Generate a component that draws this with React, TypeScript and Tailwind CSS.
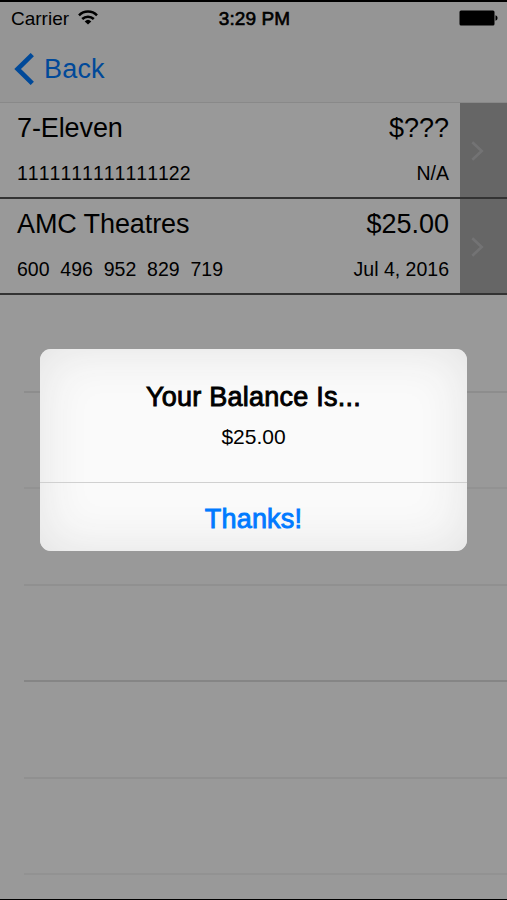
import { useState } from "react";

type Card = {
  name: string;
  number: string;
  balance: string;
  date: string;
};

const cards: Card[] = [
  { name: "7-Eleven", number: "1111111111111122", balance: "$???", date: "N/A" },
  { name: "AMC Theatres", number: "600  496  952  829  719", balance: "$25.00", date: "Jul 4, 2016" },
];

// separator shade of every empty row under the cards
const emptyRows = [
  "border-[#ebebeb]",
  "border-[#f3f3f3]",
  "border-[#f0f0f0]",
  "border-[#dedede]",
  "border-[#f0f0f0]",
  "border-[#f3f3f3]",
];

function StatusBar() {
  return (
    <div className="grid h-8 grid-cols-3 items-center pl-[11px] pr-[9px] text-[19px] leading-none text-black">
      <div className="flex items-center gap-[9px]">
        <span>Carrier</span>
        <svg width="20" height="15" viewBox="0 0 20 15" fill="none" stroke="#000" strokeWidth="2.5" className="-mt-[2px]">
          <path d="M1 5.3a12.8 12.8 0 0 1 18 0" />
          <path d="M4.2 9a8.3 8.3 0 0 1 11.6 0" />
          <path d="M10 14.6 6.7 11.4a4.8 4.8 0 0 1 6.6 0z" fill="#000" stroke="none" />
        </svg>
      </div>
      <span className="text-center tracking-[0.1px] [-webkit-text-stroke:0.6px_#000]">3:29 PM</span>
      <svg width="39" height="16" viewBox="0 0 39 16" className="justify-self-end">
        <rect x="0.5" y="0.5" width="35" height="15" rx="1.5" fill="#000" />
        <path d="M36.5 5.3c1.4.4 2 1.3 2 2.7s-.6 2.3-2 2.7z" fill="#000" />
      </svg>
    </div>
  );
}

function CardRow({ card }: { card: Card }) {
  return (
    <div className="flex h-24 border-b-2 border-[#555] text-black">
      <div className="flex flex-1 justify-between pl-[17px] pr-[11px]">
        <div>
          <p className="mt-[9px] text-[27px] leading-8 tracking-[-0.1px]">{card.name}</p>
          <p className="mt-[17px] whitespace-pre text-[19.5px] leading-6 [font-kerning:none]">{card.number}</p>
        </div>
        <div className="text-right">
          <p className="mt-[9px] text-[27px] leading-8">{card.balance}</p>
          <p className="mt-[17px] text-[19.5px] leading-6 [font-kerning:none]">{card.date}</p>
        </div>
      </div>
      <div className="flex w-[47px] items-center bg-[#aaa] pl-[11px] pt-0.5">
        <svg width="13" height="20" viewBox="0 0 13 20" fill="none" stroke="#c0c0c2" strokeWidth="2.6">
          <path d="M1.3 1.3 10.7 10l-9.4 8.7" />
        </svg>
      </div>
    </div>
  );
}

export default function App() {
  const [open, setOpen] = useState(true);

  return (
    <div className="relative h-[900px] w-[507px] overflow-hidden bg-white font-['Liberation_Sans',Arial,sans-serif]">
      <div className="flex h-full flex-col border-b border-t-2 border-black">
        {/* Status bar + navigation */}
        <header className="h-[101px] shrink-0 border-b border-[#e4e4e4] bg-[#f8f8f8]">
          <StatusBar />
          <button className="flex h-[69px] items-center gap-[9px] pl-[14px] text-[27px] text-[#007aff]">
            <svg width="21" height="32" viewBox="0 0 21 32" fill="none" stroke="currentColor" strokeWidth="4.6">
              <path d="M18.3 1.6 3.6 16l14.7 14.4" />
            </svg>
            <span className="pt-px tracking-[0.2px]">Back</span>
          </button>
        </header>

        {/* Card list */}
        <main>
          {cards.map((card) => (
            <CardRow key={card.name} card={card} />
          ))}
          <div className="pl-6 pt-px">
            {emptyRows.map((shade, i) => (
              <div key={i} className={`h-[96.5px] border-b-2 ${shade}`} />
            ))}
          </div>
        </main>
      </div>

      {/* Balance alert */}
      {open && (
        <div className="absolute inset-0 flex items-center justify-center bg-black/40">
          <div className="flex h-[202px] w-[427px] flex-col rounded-[11px] bg-[#fafafa] text-center text-black shadow-[inset_0_0_50px_#e2e2e2]">
            <div className="h-[134px] border-b border-[#d0d0d0]">
              <h2 className="mt-8 text-[27px] leading-8 tracking-[0.25px] [-webkit-text-stroke:0.9px_#000]">Your Balance Is...</h2>
              <p className="mt-3 text-[21px] leading-6">$25.00</p>
            </div>
            <button
              onClick={() => setOpen(false)}
              className="flex-1 pt-1 text-[27px] leading-8 tracking-[0.2px] text-[#007aff] [-webkit-text-stroke:0.9px_#007aff]"
            >
              Thanks!
            </button>
          </div>
        </div>
      )}
    </div>
  );
}
